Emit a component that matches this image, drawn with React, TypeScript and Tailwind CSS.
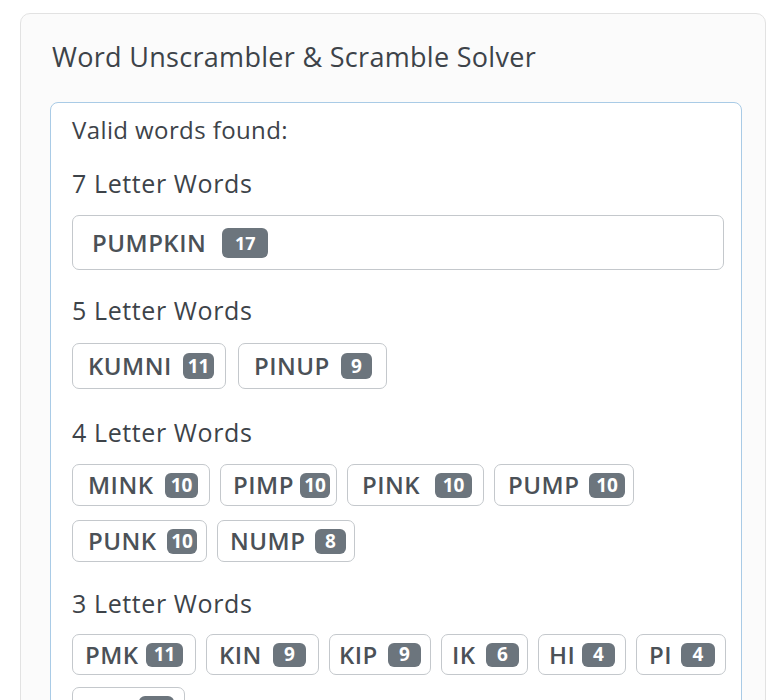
// chip: outer width + paddings, badge: its width
type Word = { word: string; score: number; chip: string; badge: string }

type Group = {
  title: string
  words: Word[]
  h: string
  bh: string
  gap: string
  top: string
  headTop: string
}

const groups: Group[] = [
  {
    title: '7 Letter Words',
    words: [{ word: 'PUMPKIN', score: 17, chip: 'w-[652px] pl-[19px]', badge: 'ml-[16px] w-[46px] text-[18px]' }],
    h: 'h-[55px]',
    bh: 'h-[30px]',
    gap: 'gap-[12px]',
    top: 'mt-[16px]',
    headTop: 'mt-[23px]',
  },
  {
    title: '5 Letter Words',
    words: [
      { word: 'KUMNI', score: 11, chip: 'w-[154px] pl-[15px] pr-[11px]', badge: 'ml-auto w-[31px] text-[19px]' },
      { word: 'PINUP', score: 9, chip: 'w-[149px] pl-[15px] pr-[14px]', badge: 'ml-auto w-[31px] text-[19px]' },
    ],
    h: 'h-[46px]',
    bh: 'h-[26px]',
    gap: 'gap-x-[12px] gap-y-[14px]',
    top: 'mt-[17px]',
    headTop: 'mt-[24px]',
  },
  {
    title: '4 Letter Words',
    words: [
      { word: 'MINK', score: 10, chip: 'w-[138px] pl-[15px] pr-[11px]', badge: 'ml-auto w-[33px] text-[19px]' },
      { word: 'PIMP', score: 10, chip: 'w-[117px] pl-[12px] pr-[6px]', badge: 'ml-auto w-[30px] text-[19px]' },
      { word: 'PINK', score: 10, chip: 'w-[137px] pl-[14px] pr-[11px]', badge: 'ml-auto w-[37px] text-[19px]' },
      { word: 'PUMP', score: 10, chip: 'w-[140px] pl-[13px] pr-[8px]', badge: 'ml-auto w-[36px] text-[19px]' },
      { word: 'PUNK', score: 10, chip: 'w-[135px] pl-[15px] pr-[9px]', badge: 'ml-auto w-[30px] text-[19px]' },
      { word: 'NUMP', score: 8, chip: 'w-[138px] pl-[12px] pr-[8px]', badge: 'ml-auto w-[31px] text-[19px]' },
    ],
    h: 'h-[42px]',
    bh: 'h-[25px]',
    gap: 'gap-x-[10px] gap-y-[14px]',
    top: 'mt-[16px]',
    headTop: 'mt-[27px]',
  },
  {
    title: '3 Letter Words',
    words: [
      { word: 'PMK', score: 11, chip: 'w-[124px] pl-[12px] pr-[12px]', badge: 'ml-auto w-[37px] text-[19px]' },
      { word: 'KIN', score: 9, chip: 'w-[113px] pl-[12px] pr-[12px]', badge: 'ml-auto w-[33px] text-[19px]' },
      { word: 'KIP', score: 9, chip: 'w-[102px] pl-[9px] pr-[9px]', badge: 'ml-auto w-[33px] text-[19px]' },
      { word: 'IK', score: 6, chip: 'w-[87px] pl-[10px] pr-[8px]', badge: 'ml-auto w-[33px] text-[19px]' },
      { word: 'HI', score: 4, chip: 'w-[88px] pl-[10px] pr-[10px]', badge: 'ml-auto w-[33px] text-[19px]' },
      { word: 'PI', score: 4, chip: 'w-[90px] pl-[12px] pr-[10px]', badge: 'ml-auto w-[34px] text-[19px]' },
      { word: 'UM', score: 4, chip: 'w-[113px] pl-[12px] pr-[10px]', badge: 'ml-auto w-[35px] text-[19px]' },
    ],
    h: 'h-[41px]',
    bh: 'h-[24px]',
    gap: 'gap-x-[10px] gap-y-[12px]',
    top: 'mt-[15px]',
    headTop: 'mt-[25px]',
  },
]

// one word button with its score badge
function Chip({ w, g }: { w: Word; g: Group }) {
  return (
    <div className={`flex shrink-0 items-center rounded-[7px] border border-[#c4c8cc] bg-white ${g.h} ${w.chip}`}>
      <span className="text-[24px] leading-none font-semibold tracking-[0.02em] text-[#4b5157]">{w.word}</span>
      <span
        className={`flex items-center justify-center rounded-[6px] bg-[#6c757d] leading-none font-bold text-white ${g.bh} ${w.badge}`}
      >
        {w.score}
      </span>
    </div>
  )
}

export default function App() {
  return (
    <div className="h-[700px] overflow-hidden bg-white pl-[20px] pt-[13px] font-['Open_Sans','Noto_Sans',sans-serif]">
      <div className="w-[746px] rounded-[10px] border border-[#e2e2e2] bg-[#fbfbfb] pl-[29px] pr-[23px] pt-[25px] pb-10">
        <h2 className="pl-[2px] text-[27px] leading-[36px] font-normal tracking-[0.3px] text-[#3d4349]">
          Word Unscrambler &amp; Scramble Solver
        </h2>

        <div className="mt-[27px] w-[692px] rounded-[8px] border border-[#a9cbe6] bg-white pl-[21px] pr-[12px] pt-[13px] pb-8">
          <p className="text-[24px] leading-[28px] tracking-[0.4px] text-[#3d4349]">Valid words found:</p>

          {groups.map((g) => (
            <div key={g.title}>
              <h3 className={`${g.headTop} text-[25px] leading-[32px] tracking-[0.6px] text-[#3d4349]`}>{g.title}</h3>
              <div className={`${g.top} flex flex-wrap ${g.gap}`}>
                {g.words.map((w) => (
                  <Chip key={w.word} w={w} g={g} />
                ))}
              </div>
            </div>
          ))}
        </div>
      </div>
    </div>
  )
}
